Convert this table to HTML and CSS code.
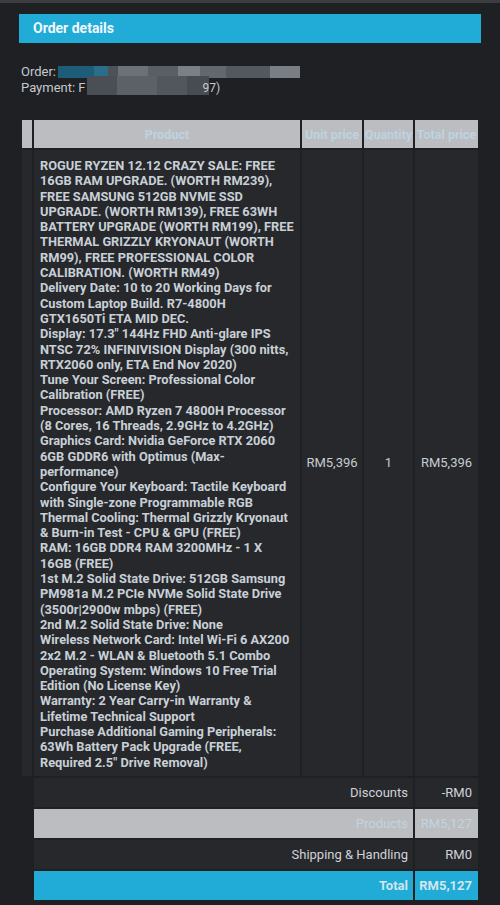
FILE: index.html
```html
<!DOCTYPE html>
<html>
<head>
<meta charset="utf-8">
<link rel="stylesheet" href="styles.css">
</head>
<body>
<div class="topstrip"></div>
<div class="page">
  <h2 class="heading">Order details</h2>
  <div class="info">
    <div class="info-line">Order: <span class="blur blur-order"><i class="b1"></i><i class="b2"></i><i class="b3"></i><i class="b4"></i><i class="b5"></i><i class="b6"></i><i class="b7"></i><i class="b8"></i><i class="b9"></i></span></div>
    <div class="info-line">Payment: F<span class="blur blur-pay"><i class="p1"></i><i class="p2"></i><i class="p3"></i><i class="p4"></i></span><span class="tail">97)</span></div>
  </div>
  <table class="order">
    <colgroup>
      <col class="c0"><col class="c1"><col class="c2"><col class="c3"><col class="c4">
    </colgroup>
    <thead>
      <tr>
        <th></th>
        <th>Product</th>
        <th>Unit price</th>
        <th>Quantity</th>
        <th>Total price</th>
      </tr>
    </thead>
    <tbody>
      <tr>
        <td></td>
        <td class="desc">ROGUE RYZEN 12.12 CRAZY SALE: FREE 16GB RAM UPGRADE. (WORTH RM239), FREE SAMSUNG 512GB NVME SSD UPGRADE. (WORTH RM139), FREE 63WH BATTERY UPGRADE (WORTH RM199), FREE THERMAL GRIZZLY KRYONAUT (WORTH RM99), FREE PROFESSIONAL COLOR CALIBRATION. (WORTH RM49)<br>Delivery Date: 10 to 20 Working Days for Custom Laptop Build. R7-4800H GTX1650Ti ETA MID DEC.<br>Display: 17.3" 144Hz FHD Anti-glare IPS NTSC 72% INFINIVISION Display (300 nitts, RTX2060 only, ETA End Nov 2020)<br>Tune Your Screen: Professional Color Calibration (FREE)<br>Processor: AMD Ryzen 7 4800H Processor (8 Cores, 16 Threads, 2.9GHz to 4.2GHz)<br>Graphics Card: Nvidia GeForce RTX 2060 6GB GDDR6 with Optimus (Max-performance)<br>Configure Your Keyboard: Tactile Keyboard with Single-zone Programmable RGB<br>Thermal Cooling: Thermal Grizzly Kryonaut &amp; Burn-in Test - CPU &amp; GPU (FREE)<br>RAM: 16GB DDR4 RAM 3200MHz - 1 X 16GB (FREE)<br>1st M.2 Solid State Drive: 512GB Samsung PM981a M.2 PCIe NVMe Solid State Drive (3500r|2900w mbps) (FREE)<br>2nd M.2 Solid State Drive: None<br>Wireless Network Card: Intel Wi-Fi 6 AX200 2x2 M.2 - WLAN &amp; Bluetooth 5.1 Combo<br>Operating System: Windows 10 Free Trial Edition (No License Key)<br>Warranty: 2 Year Carry-in Warranty &amp; Lifetime Technical Support<br>Purchase Additional Gaming Peripherals: 63Wh Battery Pack Upgrade (FREE, Required 2.5" Drive Removal)</td>
        <td class="num">RM5,396</td>
        <td class="num">1</td>
        <td class="num">RM5,396</td>
      </tr>
    </tbody>
    <tfoot>
      <tr class="sum">
        <td class="blank"></td>
        <td colspan="3" class="label">Discounts</td>
        <td class="val">-RM0</td>
      </tr>
      <tr class="sum light">
        <td class="blank"></td>
        <td colspan="3" class="label">Products</td>
        <td class="val">RM5,127</td>
      </tr>
      <tr class="sum">
        <td class="blank"></td>
        <td colspan="3" class="label">Shipping &amp; Handling</td>
        <td class="val">RM0</td>
      </tr>
      <tr class="sum total">
        <td class="blank"></td>
        <td colspan="3" class="label">Total</td>
        <td class="val">RM5,127</td>
      </tr>
    </tfoot>
  </table>
</div>
</body>
</html>
```

FILE: styles.css
```css
html, body {
  margin: 0;
  padding: 0;
  background: #1f2024;
  font-family: Roboto, "Liberation Sans", sans-serif;
  color: #cfd2d6;
}

.topstrip {
  height: 3px;
  background: #3c3d41;
}

.page {
  padding: 11px 19px 0 19px;
}

.heading {
  margin: 0;
  height: 29px;
  line-height: 29px;
  padding-left: 14px;
  background: #20acd6;
  color: #f2f7fa;
  font-size: 14px;
  font-weight: 700;
}

.info {
  margin: 21px 0 0 2px;
  font-size: 13px;
  line-height: 16px;
  color: #c6c9cd;
}

.info-line {
  display: flex;
  align-items: center;
  height: 16px;
}

.blur {
  display: inline-flex;
  height: 12px;
}

.blur i {
  display: block;
  height: 100%;
}

.blur-order { margin-left: 2px; }
.b1 { width: 36px; background: #1d5d79; }
.b2 { width: 14px; background: #2b6e8a; }
.b3 { width: 10px; background: #4c5259; }
.b4 { width: 30px; background: #6c7178; }
.b5 { width: 30px; background: #5a5f66; }
.b6 { width: 22px; background: #7b8086; }
.b7 { width: 26px; background: #63686f; }
.b8 { width: 44px; background: #53585f; }
.b9 { width: 30px; background: #7a7f85; }

.blur-pay {
  height: 19px;
  margin-top: -6px;
  margin-left: 1px;
}
.p1 { width: 30px; background: #4a4f56; }
.p2 { width: 40px; background: #5c6168; }
.p3 { width: 30px; background: #52575e; }
.p4 { width: 22px; background: #484c52; }
.tail { margin-left: -6px; font-size: 12px; }

.order {
  margin: 22px 0 0 1px;
  width: 460px;
  table-layout: fixed;
  border-collapse: separate;
  border-spacing: 2px;
}

.c0 { width: 10px; }
.c1 { width: 266px; }
.c2 { width: 60px; }
.c3 { width: 49px; }
.c4 { width: 63px; }

.order th {
  height: 28px;
  padding: 0;
  background: #bcbdc1;
  color: #bdd3e0;
  font-size: 12.5px;
  font-weight: 700;
  text-align: center;
  white-space: nowrap;
  overflow: hidden;
}

.order tbody td {
  background: #27282c;
  padding: 0;
  vertical-align: middle;
}

.order td.desc {
  padding: 8px 6px 6px 6px;
  font-size: 12.8px;
  line-height: 15.3px;
  font-weight: 700;
  color: #c8d0d7;
  text-align: left;
}

.order td.num {
  text-align: center;
  font-size: 13px;
  color: #c6ccd1;
}

.sum td {
  height: 29px;
  padding: 0 6px 0 0;
  background: #27282c;
  font-size: 13px;
  color: #d0d3d6;
  text-align: right;
}

.sum td.blank {
  background: transparent;
}

.sum td.label {
  padding-right: 5px;
}

.sum.light td.label,
.sum.light td.val {
  background: #bcbdc1;
  color: #c2d4df;
}

.sum.total td.label,
.sum.total td.val {
  background: #20acd6;
  color: #d2e6ef;
  font-weight: 700;
}
```
